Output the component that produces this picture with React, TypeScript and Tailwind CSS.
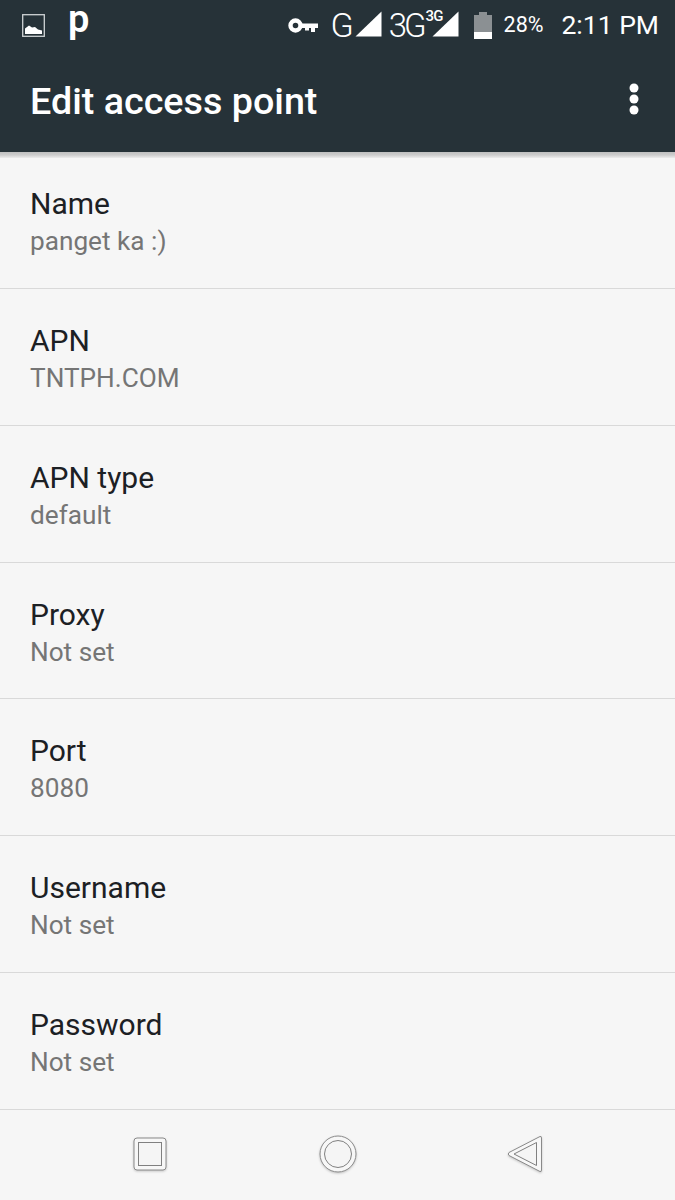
const rows = [
  ["Name", "panget ka :)"],
  ["APN", "TNTPH.COM"],
  ["APN type", "default"],
  ["Proxy", "Not set"],
  ["Port", "8080"],
  ["Username", "Not set"],
  ["Password", "Not set"],
];

function Tri({ className }: { className: string }) {
  return (
    <svg viewBox="0 0 27 26" className={className}>
      <path d="M0.5 25.5 L26.5 0.5 V25.5 Z" fill="#fff" />
    </svg>
  );
}

export default function App() {
  return (
    <div className="flex h-[1200px] w-[675px] flex-col overflow-hidden bg-[#f6f6f6] font-['Roboto',sans-serif]">
      <header className="h-[152px] shrink-0 bg-[#263238] text-white">
        <div className="flex h-[50px] items-center justify-between pl-[22px] pr-[16px]">
          <div className="flex items-center">
            <svg viewBox="0 0 23 23" className="h-[23px] w-[23px]">
              <rect x="0.7" y="0.7" width="21.6" height="21.6" fill="none" stroke="#cfd3d5" strokeWidth="1.3" />
              <path d="M3 20 V14.5 L7 11.5 L10 13.5 L13 13 L16 15.5 L20 16.5 V20 Z" fill="#fff" />
            </svg>
            <span className="ml-[23px] mt-[-12px] text-[38px] leading-[26px] font-semibold">p</span>
          </div>
          <div className="flex items-center">
            <svg viewBox="0 0 30 15" className="h-[15px] w-[30px]">
              <circle cx="7.5" cy="7.5" r="5" fill="none" stroke="#fff" strokeWidth="4.4" />
              <path d="M12 5.5 H30 V10 H27 V14 H23 V10 H21 V12.5 H17 V10 H12 Z" fill="#fff" />
            </svg>
            <span className="ml-[12px] text-[34px] leading-none font-light">G</span>
            <Tri className="ml-[1px] mt-[-3px] h-[26px] w-[27px]" />
            <span className="ml-[7px] text-[33px] leading-none font-light tracking-[-3px]">3G</span>
            <div className="relative ml-[8px] mt-[-3px] h-[26px] w-[27px]">
              <Tri className="h-[26px] w-[27px]" />
              <span className="absolute left-[-6px] top-[-2px] text-[15px] leading-none font-medium tracking-[-0.8px]">3G</span>
            </div>
            <svg viewBox="0 0 18 27" className="ml-[15px] h-[27px] w-[18px]">
              <path d="M0 3 H5 V0 H13 V3 H18 V20 H0 Z" fill="#8b9093" />
              <rect x="0" y="20" width="18" height="7" fill="#fff" />
            </svg>
            <span className="ml-[12px] text-[21.5px] leading-none">28%</span>
            <span className="ml-[18px] text-[26.5px] leading-none">2:11 PM</span>
          </div>
        </div>
        <div className="flex h-[102px] items-start justify-between pl-[30px] pr-[36px]">
          <h1 className="mt-[29px] text-[37.7px] leading-[44px] font-medium">Edit access point</h1>
          <svg viewBox="0 0 10 32" className="mt-[33px] h-[32px] w-[10px]">
            <circle cx="5" cy="5" r="4.5" fill="#fff" />
            <circle cx="5" cy="16" r="4.5" fill="#fff" />
            <circle cx="5" cy="27" r="4.5" fill="#fff" />
          </svg>
        </div>
      </header>
      <main className="relative flex h-[958px] shrink-0 flex-col">
        <div className="absolute inset-x-0 top-0 h-[6px] bg-gradient-to-b from-[#bfc0c0] via-[#cdcdcd] to-[#ececec]" />
        {rows.map(([title, value]) => (
          <div key={title} className="flex flex-1 flex-col border-b border-[#d9d9d9] pl-[30px] pt-[30px]">
            <div className="text-[30px] leading-[44px] text-[#1c2024]">{title}</div>
            <div className="mt-[-5px] text-[26.2px] leading-[40px] text-[#757575]">{value}</div>
          </div>
        ))}
      </main>
      <nav className="flex flex-1 items-center">
        <div className="ml-[133px] mt-[-3px] flex items-center">
          <svg viewBox="0 0 34 36" className="h-[36px] w-[34px] drop-shadow-[0_1px_1px_rgba(0,0,0,0.2)]">
            <rect x="1" y="2" width="32" height="32" rx="3" fill="#f7f7f7" stroke="#8a8a8a" strokeWidth="1" />
            <rect x="5.5" y="6.5" width="23" height="23" fill="#f5f5f5" stroke="#808080" strokeWidth="1" />
          </svg>
          <svg viewBox="0 0 38 38" className="ml-[152px] h-[38px] w-[38px] drop-shadow-[0_1px_1px_rgba(0,0,0,0.2)]">
            <circle cx="19" cy="19" r="18" fill="#f7f7f7" stroke="#8a8a8a" strokeWidth="1" />
            <circle cx="19" cy="19" r="13.5" fill="#f5f5f5" stroke="#808080" strokeWidth="1" />
          </svg>
          <svg viewBox="0 0 36 38" className="ml-[150px] h-[38px] w-[36px] drop-shadow-[0_1px_1px_rgba(0,0,0,0.2)]">
            <path d="M33 1.5 Q34.5 1 34.5 3 V35 Q34.5 37 33 36.5 L2 20.5 Q0.5 19 2 17.5 Z" fill="#f7f7f7" stroke="#8a8a8a" strokeWidth="1" strokeLinejoin="round" />
            <path d="M29.5 7.5 V30.5 L7 19 Z" fill="#f5f5f5" stroke="#808080" strokeWidth="1" strokeLinejoin="round" />
          </svg>
        </div>
      </nav>
    </div>
  );
}
